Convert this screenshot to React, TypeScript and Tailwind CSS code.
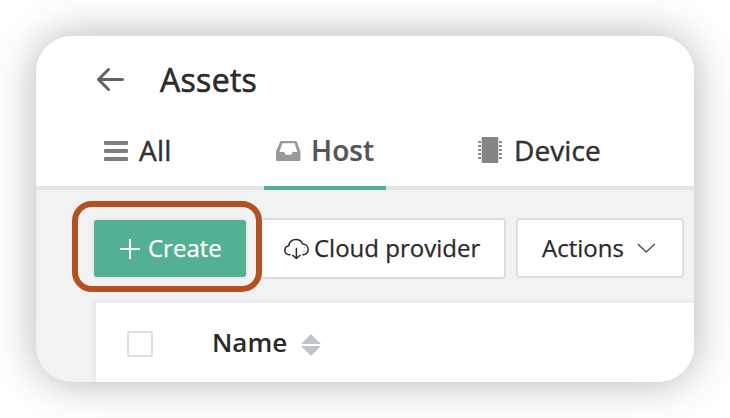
import type { ReactNode } from "react";

function BackIcon() {
  return (
    <svg className="h-7 w-7 shrink-0" viewBox="0 0 28 28" fill="none" stroke="#626267" strokeWidth="3" strokeLinecap="round" strokeLinejoin="round">
      <path d="M26.5 13.5H2.5M12.5 3.5L2.5 13.5L12.5 23.5" />
    </svg>
  );
}

function MenuIcon() {
  return (
    <svg className="h-5 w-6 shrink-0" viewBox="0 0 24 20" fill="#7e7e7e">
      <rect width="24" height="4" rx="1" />
      <rect y="8" width="24" height="4" rx="1" />
      <rect y="16" width="24" height="4" rx="1" />
    </svg>
  );
}

function InboxIcon() {
  return (
    <svg className="h-5 w-[25px] shrink-0" viewBox="0 0 25 20" fill="#999" fillRule="evenodd">
      <path d="M5.3 0H19.7Q20.5 0 20.9.8L24.5 10.5V18.8Q24.5 20 23.3 20H1.2Q0 20 0 18.8V10.5L4.1.8Q4.5 0 5.3 0ZM6.3 2.2L3.4 11H7.5Q8.5 11 8.8 12L9.3 13.7H15.5L16 12Q16.3 11 17.3 11H21.3L18.7 2.2Z" />
    </svg>
  );
}

function ChipIcon() {
  return (
    <svg className="h-[26px] w-6 shrink-0" viewBox="0 0 24 26" fill="#858587">
      <rect x="3.7" width="16.6" height="26" rx="1.2" />
      <path d="M.2 4h2.8v2H.2zM.2 8h2.8v2H.2zM.2 12h2.8v2H.2zM.2 16h2.8v2H.2zM.2 20h2.8v2H.2zM21 4h2.8v2H21zM21 8h2.8v2H21zM21 12h2.8v2H21zM21 16h2.8v2H21zM21 20h2.8v2H21z" />
    </svg>
  );
}

function CloudIcon() {
  return (
    <svg className="h-[22px] w-[26px] shrink-0" viewBox="0 0 26 22" fill="none" stroke="#292b2b" strokeWidth="1.5" strokeLinecap="round" strokeLinejoin="round">
      <path d="M6 16.7H5.2C2.6 16.7.8 14.9.8 12.5C.8 10 2.4 8.3 4.7 7.8C5.4 4 8.4 1.5 12 1.5C15.2 1.5 17.6 3.3 18.6 6C21.8 6 24.1 8.4 24.1 11.4C24.1 14.4 22 16.7 19.6 16.7H18.8M12.4 10.5V20.5M8.7 17.2L12.4 20.5L16.1 17.2" />
    </svg>
  );
}

function Tab({ active, className, children }: { active?: boolean; className: string; children: ReactNode }) {
  return (
    <div className={`flex h-[63px] items-start border-b-4 ${active ? "border-[#54b095] font-semibold text-[#555] [-webkit-text-stroke:0.2px_#555]" : "border-[#e4e5eb] font-medium text-[#303133] [-webkit-text-stroke:0.45px_#303133]"} ${className}`}>
      {children}
    </div>
  );
}

export default function App() {
  return (
    <div className="h-[418px] w-[730px] overflow-hidden bg-white p-9 font-['Open_Sans',sans-serif] text-[#2a2a2a]">
      <main className="flex h-[346px] w-[658px] flex-col rounded-[36px] bg-[#f2f2f2] shadow-[0_0_42px_rgba(0,0,0,0.3)]">
        <section className="flex min-h-0 flex-1 flex-col overflow-hidden rounded-[36px]">
          <header className="flex h-[91px] shrink-0 items-center bg-white pb-1 pl-[60px]">
            <BackIcon />
            <h1 className="ml-9 text-[32px] leading-[40px] font-medium tracking-[0.3px] [-webkit-text-stroke:0.6px_#2a2a2a]">Assets</h1>
          </header>
          <nav className="flex h-[63px] shrink-0 bg-white text-[28px] leading-[46px]">
            <Tab className="w-[228px] pl-[68px]">
              <span className="mt-[14px]"><MenuIcon /></span>
              <span className="ml-[11px] tracking-[0.3px]">All</span>
            </Tab>
            <Tab active className="w-[122px] pl-3">
              <span className="mt-[14px]"><InboxIcon /></span>
              <span className="ml-[10px] tracking-[0.1px]">Host</span>
            </Tab>
            <Tab className="flex-1 pl-[92px]">
              <span className="mt-[10px]"><ChipIcon /></span>
              <span className="ml-3 tracking-[0.1px]">Device</span>
            </Tab>
          </nav>
          <div className="relative flex h-[109px] shrink-0 items-start pt-7 pl-14 text-[24px]">
            <button className="flex h-[61px] w-[156px] items-center rounded border-2 border-[#ebebef] bg-[#54b095] bg-clip-padding pl-6 text-white">
              <svg className="h-6 w-6" viewBox="0 0 24 24" stroke="white" strokeWidth="2"><path d="M2 12H22M12 2V22" /></svg>
              <span className="mb-px ml-[6px] [-webkit-text-stroke:0.25px_white]">Create</span>
            </button>
            <button className="ml-[10px] flex h-[61px] w-[248px] items-center rounded border-2 border-[#dcdce4] bg-white pl-6">
              <CloudIcon />
              <span className="mb-[2px] ml-1 [-webkit-text-stroke:0.25px_#2a2a2a]">Cloud provider</span>
            </button>
            <button className="ml-[10px] flex h-[60px] w-[168px] items-center rounded border-2 border-[#dcdce4] bg-white pl-6">
              <span className="[-webkit-text-stroke:0.25px_#2a2a2a]">Actions</span>
              <svg className="ml-3 h-3 w-5" viewBox="0 0 20 12" fill="none" stroke="#555" strokeWidth="1.5"><path d="M1.8 2L10.2 10L18.8 2" /></svg>
            </button>
            <div className="absolute top-[11px] left-9 h-[91px] w-[190px] rounded-[20px] border-6 border-[#b35120]" />
          </div>
          <div className="ml-14 flex min-h-0 flex-1 items-start rounded-tl border-t-4 border-l-4 border-[#ecedf3] bg-white">
            <span className="mt-7 ml-[31px] h-[26px] w-[26px] rounded-[2px] border-2 border-[#dfdfe6] bg-white" />
            <span className="mt-[21px] ml-[59px] text-[26px] leading-[36px] font-semibold">Name</span>
            <svg className="mt-[31px] ml-[14px] h-[22px] w-5" viewBox="0 0 20 22" fill="#bfc3ca"><path d="M0 10L10 0L20 10ZM0 12H20L10 22Z" /></svg>
          </div>
        </section>
      </main>
    </div>
  );
}
